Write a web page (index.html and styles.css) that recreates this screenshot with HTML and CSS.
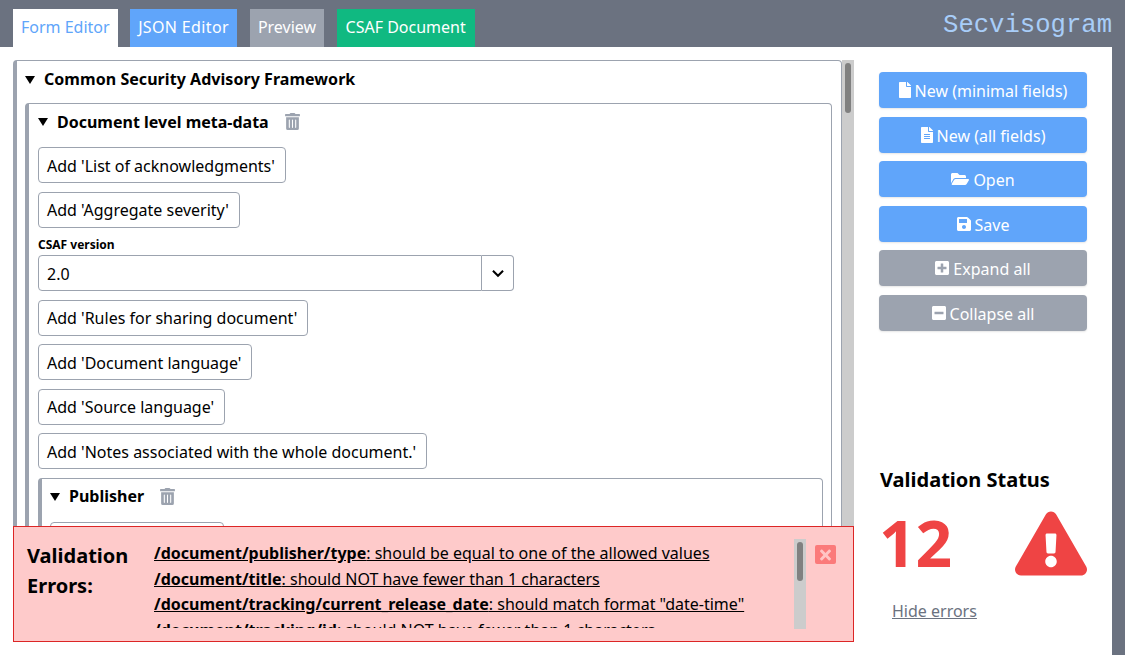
FILE: index.html
```html
<!DOCTYPE html>
<html lang="en">

<head>
    <title>Secvisogram</title>
    <meta charset="UTF-8">
    <link rel="stylesheet" href="styles.css">
</head>

<body>
    <header class="topbar">
        <nav class="tabs">
            <a class="tab tab-active">Form Editor</a>
            <a class="tab tab-blue">JSON Editor</a>
            <a class="tab tab-gray">Preview</a>
            <a class="tab tab-green">CSAF Document</a>
        </nav>
        <div class="brand">Secvisogram</div>
    </header>

    <div class="page">
        <main class="editor">
            <div class="form-scroll">
                <section class="group group-root">
                    <h2 class="group-title"><span class="caret"></span>Common Security Advisory Framework</h2>
                    <section class="group group-doc">
                        <h2 class="group-title"><span class="caret"></span>Document level meta-data
                            <svg class="trash" viewBox="0 0 448 512"><path d="M32 464a48 48 0 0 0 48 48h288a48 48 0 0 0 48-48V128H32zm272-256a16 16 0 0 1 32 0v224a16 16 0 0 1-32 0zm-96 0a16 16 0 0 1 32 0v224a16 16 0 0 1-32 0zm-96 0a16 16 0 0 1 32 0v224a16 16 0 0 1-32 0zM432 32H312l-9.4-18.7A24 24 0 0 0 281.1 0H166.8a23.72 23.72 0 0 0-21.4 13.3L136 32H16A16 16 0 0 0 0 48v32a16 16 0 0 0 16 16h416a16 16 0 0 0 16-16V48a16 16 0 0 0-16-16z"/></svg>
                        </h2>
                        <button type="button" class="add-btn">Add 'List of acknowledgments'</button>
                        <button type="button" class="add-btn">Add 'Aggregate severity'</button>
                        <label class="field-label">CSAF version</label>
                        <div class="select-row">
                            <div class="select-value">2.0</div>
                            <div class="select-arrow">
                                <svg viewBox="0 0 12 8"><path d="M1.5 1.5 6 6l4.500-4.500" /></svg>
                            </div>
                        </div>
                        <button type="button" class="add-btn">Add 'Rules for sharing document'</button>
                        <button type="button" class="add-btn">Add 'Document language'</button>
                        <button type="button" class="add-btn">Add 'Source language'</button>
                        <button type="button" class="add-btn">Add 'Notes associated with the whole document.'</button>
                        <section class="group group-publisher">
                            <h2 class="group-title group-title-small"><span class="caret"></span>Publisher
                                <svg class="trash" viewBox="0 0 448 512"><path d="M32 464a48 48 0 0 0 48 48h288a48 48 0 0 0 48-48V128H32zm272-256a16 16 0 0 1 32 0v224a16 16 0 0 1-32 0zm-96 0a16 16 0 0 1 32 0v224a16 16 0 0 1-32 0zm-96 0a16 16 0 0 1 32 0v224a16 16 0 0 1-32 0zM432 32H312l-9.4-18.7A24 24 0 0 0 281.1 0H166.8a23.72 23.72 0 0 0-21.4 13.3L136 32H16A16 16 0 0 0 0 48v32a16 16 0 0 0 16 16h416a16 16 0 0 0 16-16V48a16 16 0 0 0-16-16z"/></svg>
                            </h2>
                            <button type="button" class="add-btn add-btn-covered"></button>
                        </section>
                    </section>
                </section>
            </div>
            <div class="scrollbar"><div class="scrollbar-thumb"></div></div>
        </main>

        <aside class="sidebar">
            <button type="button" class="action action-blue">
                <svg class="icon" viewBox="0 0 384 512"><path d="M224 136V0H24C10.700 0 0 10.700 0 24v464c0 13.300 10.700 24 24 24h336c13.300 0 24-10.700 24-24V160H248c-13.200 0-24-10.800-24-24zm160-14.100v6.100H256V0h6.100c6.400 0 12.500 2.500 17 7l97.900 98c4.500 4.500 7 10.600 7 16.900z"/></svg>
                New (minimal fields)
            </button>
            <button type="button" class="action action-blue">
                <svg class="icon" viewBox="0 0 384 512"><path d="M224 136V0H24C10.700 0 0 10.700 0 24v464c0 13.300 10.700 24 24 24h336c13.300 0 24-10.700 24-24V160H248c-13.200 0-24-10.800-24-24zm64 236c0 6.600-5.400 12-12 12H108c-6.600 0-12-5.400-12-12v-8c0-6.600 5.400-12 12-12h168c6.600 0 12 5.400 12 12v8zm0-64c0 6.600-5.400 12-12 12H108c-6.600 0-12-5.400-12-12v-8c0-6.600 5.400-12 12-12h168c6.600 0 12 5.400 12 12v8zm0-72v8c0 6.600-5.400 12-12 12H108c-6.600 0-12-5.400-12-12v-8c0-6.600 5.400-12 12-12h168c6.600 0 12 5.400 12 12zm96-114.100v6.100H256V0h6.100c6.400 0 12.500 2.500 17 7l97.900 98c4.500 4.500 7 10.600 7 16.900z"/></svg>
                New (all fields)
            </button>
            <button type="button" class="action action-blue">
                <svg class="icon" viewBox="0 0 576 512"><path d="M572.694 292.093L500.27 416.248A63.997 63.997 0 0 1 444.989 448H45.025c-18.523 0-30.064-20.093-20.731-36.093l72.424-124.155A64 64 0 0 1 152 256h399.964c18.523 0 30.064 20.093 20.73 36.093zM152 224h328v-48c0-26.51-21.49-48-48-48H272l-64-64H48C21.49 64 0 85.49 0 112v278.046l69.077-118.418C86.214 242.25 117.989 224 152 224z"/></svg>
                Open
            </button>
            <button type="button" class="action action-blue">
                <svg class="icon" viewBox="0 0 448 512"><path d="M433.941 129.941l-83.882-83.882A48 48 0 0 0 316.118 32H48C21.49 32 0 53.49 0 80v352c0 26.51 21.49 48 48 48h352c26.51 0 48-21.49 48-48V163.882a48 48 0 0 0-14.059-33.941zM224 416c-35.346 0-64-28.654-64-64 0-35.346 28.654-64 64-64s64 28.654 64 64c0 35.346-28.654 64-64 64zm96-304.52V212c0 6.627-5.373 12-12 12H76c-6.627 0-12-5.373-12-12V108c0-6.627 5.373-12 12-12h228.52c3.183 0 6.235 1.264 8.485 3.515l3.48 3.48A11.996 11.996 0 0 1 320 111.48z"/></svg>
                Save
            </button>
            <button type="button" class="action action-gray">
                <svg class="icon" viewBox="0 0 448 512"><path d="M400 32H48C21.500 32 0 53.500 0 80v352c0 26.500 21.500 48 48 48h352c26.500 0 48-21.500 48-48V80c0-26.500-21.500-48-48-48zm-32 252c0 6.600-5.400 12-12 12h-92v92c0 6.600-5.400 12-12 12h-56c-6.600 0-12-5.400-12-12v-92H92c-6.600 0-12-5.400-12-12v-56c0-6.600 5.400-12 12-12h92v-92c0-6.600 5.400-12 12-12h56c6.600 0 12 5.400 12 12v92h92c6.600 0 12 5.400 12 12v56z"/></svg>
                Expand all
            </button>
            <button type="button" class="action action-gray">
                <svg class="icon" viewBox="0 0 448 512"><path d="M400 32H48C21.500 32 0 53.500 0 80v352c0 26.500 21.500 48 48 48h352c26.500 0 48-21.500 48-48V80c0-26.500-21.500-48-48-48zM92 296c-6.600 0-12-5.400-12-12v-56c0-6.600 5.400-12 12-12h264c6.600 0 12 5.400 12 12v56c0 6.600-5.400 12-12 12H92z"/></svg>
                Collapse all
            </button>

            <h2 class="status-title">Validation Status</h2>
            <div class="status-row">
                <span class="status-count">12</span>
                <svg class="status-icon" viewBox="0 0 576 512"><path d="M569.517 440.013C587.975 472.007 564.806 512 527.94 512H48.054c-36.937 0-59.999-40.055-41.577-71.987L246.423 24.013c18.467-32.009 64.72-31.951 83.154 0l239.94 416zM288 354c-25.405 0-46 20.595-46 46s20.595 46 46 46 46-20.595 46-46-20.595-46-46-46zm-43.673-165.346l7.418 136c.347 6.364 5.609 11.346 11.982 11.346h48.546c6.373 0 11.635-4.982 11.982-11.346l7.418-136c.375-6.874-5.098-12.654-11.982-12.654h-63.383c-6.884 0-12.356 5.780-11.981 12.654z"/></svg>
            </div>
            <a class="hide-errors">Hide errors</a>
        </aside>

        <div class="errors">
            <h3 class="errors-title">Validation Errors:</h3>
            <div class="errors-list">
                <div class="error-line"><b>/document/publisher/type</b>: should be equal to one of the allowed values</div>
                <div class="error-line"><b>/document/title</b>: should NOT have fewer than 1 characters</div>
                <div class="error-line"><b>/document/tracking/current_release_date</b>: should match format "date-time"</div>
                <div class="error-line"><b>/document/tracking/id</b>: should NOT have fewer than 1 characters</div>
            </div>
            <div class="scrollbar errors-scrollbar"><div class="scrollbar-thumb"></div></div>
            <button type="button" class="errors-close">
                <svg viewBox="0 0 352 512"><path d="M242.72 256l100.07-100.07c12.28-12.28 12.28-32.19 0-44.48l-22.24-22.24c-12.28-12.28-32.19-12.28-44.48 0L176 189.28 75.93 89.21c-12.28-12.28-32.19-12.28-44.48 0L9.21 111.45c-12.28 12.28-12.28 32.19 0 44.48L109.28 256 9.21 356.07c-12.28 12.28-12.28 32.19 0 44.48l22.24 22.24c12.28 12.28 32.2 12.28 44.48 0L176 322.72l100.07 100.07c12.28 12.28 32.2 12.28 44.48 0l22.24-22.24c12.28-12.28 12.28-32.19 0-44.48L242.72 256z"/></svg>
            </button>
        </div>
    </div>
</body>

</html>
```

FILE: styles.css
```css
html {
    height: 100%;
}

body {
    margin: 0;
    height: 100%;
    display: flex;
    flex-direction: column;
    overflow: hidden;
    background-color: #6b7280;
    color: #000;
    font-family: "Noto Sans", sans-serif;
    font-size: 16px;
}

/* top bar */
.topbar {
    display: flex;
    justify-content: space-between;
    align-items: flex-end;
    height: 47px;
    padding: 0 13px;
    flex: none;
}

.tabs {
    display: flex;
    gap: 12.500px;
}

.tab {
    height: 38px;
    line-height: 37px;
    padding: 0 8px;
    color: #fff;
}

.tab-active {
    background-color: #fff;
    color: #60a5fa;
}

.tab-blue {
    background-color: #60a5fa;
    letter-spacing: .35px;
}

.tab-gray {
    background-color: #9ca3af;
    margin-left: .5px;
}

.tab-green {
    background-color: #10b981;
    padding: 0 9.500px 0 9px;
}

.brand {
    align-self: flex-start;
    margin-top: 10px;
    font-family: "Liberation Mono", monospace;
    font-size: 25.600px;
    line-height: 32px;
    color: #a8cdf8;
}

/* page body */
.page {
    position: relative;
    display: flex;
    flex: 1;
    min-height: 0;
    margin-right: 13px;
    padding: 13px 25px 13px 13px;
    background-color: #fff;
}

.editor {
    display: flex;
    width: 841px;
    flex: none;
    min-height: 0;
}

.form-scroll {
    flex: 1;
    overflow: hidden;
}

.scrollbar {
    width: 12px;
    flex: none;
    padding: 3px;
    box-sizing: border-box;
    background-color: #ccc;
}

.scrollbar-thumb {
    height: 50px;
    border-radius: 3px;
    background-color: #808080;
}

/* form groups */
.group {
    border: 1px solid #9ca3af;
    border-left-width: 4px;
    border-radius: 4px;
    background-color: #fff;
}

.group-root {
    padding: 0 9px 12px 8px;
}

.group-root > .group-title {
    letter-spacing: .05px;
}

.group-doc {
    padding: 0 8px 12px 9px;
    margin-top: 6px;
}

.group-publisher {
    margin-top: 8px;
    padding: 0 8px 12px 8px;
}

.group-title {
    display: flex;
    align-items: center;
    margin: 0;
    height: 36px;
    font-size: 16px;
    font-weight: 700;
}

.group-doc > .group-title {
    height: 35px;
    margin-bottom: 8px;
}

.group-title-small {
    height: 35px;
    margin-bottom: 8px;
}

.caret {
    width: 0;
    height: 0;
    margin-right: 9px;
    margin-top: 1px;
    border-left: 5px solid transparent;
    border-right: 5px solid transparent;
    border-top: 8px solid #000;
}

.trash {
    width: 15px;
    height: 17px;
    margin-left: 16px;
    fill: #9ca3af;
}

.add-btn {
    display: block;
    height: 36px;
    padding: 1px 10px 0 8px;
    margin-bottom: 8.500px;
    border: 1px solid #9ca3af;
    border-radius: 4px;
    background-color: #fff;
    color: #000;
    font-family: inherit;
    font-size: 16px;
}

/* sits under the error panel, only its top edge shows */
.add-btn-covered {
    width: 174px;
}

.field-label {
    display: block;
    font-size: 12px;
    font-weight: 700;
    line-height: 16px;
    margin: 9.500px 0 2px;
}

.select-row {
    display: flex;
    width: 476px;
    height: 36px;
    margin-bottom: 8.500px;
}

.select-value {
    flex: 1;
    padding-left: 8px;
    line-height: 36px;
    border: 1px solid #9ca3af;
    border-radius: 4px 0 0 4px;
}

.select-arrow {
    display: flex;
    align-items: center;
    justify-content: center;
    width: 31px;
    border: 1px solid #9ca3af;
    border-left: none;
    border-radius: 0 4px 4px 0;
}

.select-arrow svg {
    width: 14px;
    height: 9px;
    fill: none;
    stroke: #000;
    stroke-width: 1.800;
}

/* right column */
.sidebar {
    display: flex;
    flex-direction: column;
    width: 208px;
    flex: none;
    margin-left: 25px;
    padding-top: 12px;
}

.action {
    display: flex;
    align-items: center;
    justify-content: center;
    gap: 4px;
    height: 36px;
    margin-bottom: 8.500px;
    padding: 2px 0 0;
    border: none;
    border-radius: 4px;
    box-shadow: 0 1px 2px rgba(0, 0, 0, .1);
    color: #fff;
    font-family: inherit;
    font-size: 16px;
}

.action-blue {
    background-color: #60a5fa;
}

.action-gray {
    background-color: #9ca3af;
}

.icon {
    height: 16px;
    margin-top: -2px;
    fill: #fff;
}

.status-title {
    margin: 127px 0 0 1px;
    font-size: 20px;
    line-height: 28px;
    font-weight: 700;
}

.status-row {
    display: flex;
    justify-content: space-between;
    align-items: center;
    margin-top: 13px;
    height: 72px;
}

.status-count {
    font-size: 64px;
    line-height: 72px;
    font-weight: 700;
    color: #ef4444;
}

.status-icon {
    width: 72px;
    height: 65px;
    fill: #ef4444;
}

.hide-errors {
    margin: 21px 0 0 13px;
    color: #6b7280;
    text-decoration: underline;
}

/* error panel, sits over the form */
.errors {
    position: absolute;
    left: 13px;
    bottom: 13px;
    display: flex;
    box-sizing: border-box;
    width: 841px;
    height: 116px;
    padding: 14px 17px 10px 13px;
    border: 1px solid #dc2626;
    background-color: #fecaca;
}

.errors-title {
    width: 128px;
    flex: none;
    margin: 0 -1px 0 0;
    font-size: 20px;
    line-height: 30px;
    font-weight: 700;
}

.errors-list {
    flex: 1;
    height: 87px;
    overflow: hidden;
    line-height: 25.500px;
}

.error-line {
    text-decoration: underline;
}

.error-line b {
    font-weight: 700;
}

.errors-scrollbar {
    height: 90px;
    margin-top: -2px;
}

.errors-scrollbar .scrollbar-thumb {
    height: 39px;
}

.errors-close {
    display: flex;
    align-items: center;
    justify-content: center;
    width: 21px;
    height: 19px;
    margin: 4px 0 0 9px;
    padding: 0;
    border: none;
    border-radius: 2px;
    background-color: #fb7a7a;
}

.errors-close svg {
    height: 16px;
    fill: #ffc4c4;
}
```
